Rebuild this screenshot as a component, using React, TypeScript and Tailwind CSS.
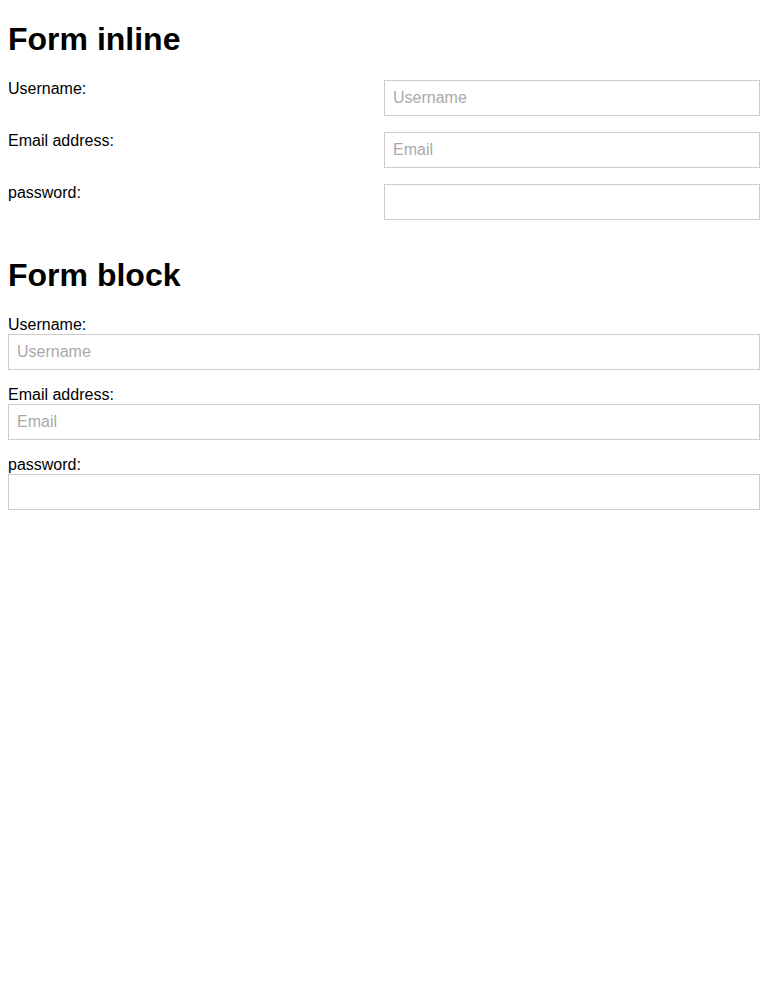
import React from "react";

const font = { fontFamily: '"Liberation Sans", Arial, sans-serif' };

function Input({ placeholder, type = "text" }: { placeholder?: string; type?: string }) {
  return (
    <input
      type={type}
      placeholder={placeholder}
      className="block w-full h-[36px] border border-[#cccccc] bg-white px-[8px] pt-[1px] text-[16px] text-black placeholder:text-[#a9a9a9] outline-none"
      style={font}
    />
  );
}

export default function App() {
  const rows = [
    { label: "Username:", placeholder: "Username", type: "text" },
    { label: "Email address:", placeholder: "Email", type: "email" },
    { label: "password:", placeholder: "", type: "password" },
  ];
  return (
    <div className="px-[8px] bg-white min-h-[1002px] text-black" style={font}>
      <h1 className="text-[32px] leading-[37px] font-bold mt-[21.44px] mb-[21.44px]">Form inline</h1>
      <form className="flex flex-col gap-[16px]">
        {rows.map((r) => (
          <div key={r.label} className="grid grid-cols-2">
            <label className="text-[16px] leading-[18px]">{r.label}</label>
            <Input placeholder={r.placeholder} type={r.type} />
          </div>
        ))}
      </form>
      <h1 className="text-[32px] leading-[37px] font-bold mt-[37.44px] mb-[21.44px]">Form block</h1>
      <form className="flex flex-col gap-[16px]">
        {rows.map((r) => (
          <div key={r.label} className="flex flex-col">
            <label className="text-[16px] leading-[18px]">{r.label}</label>
            <Input placeholder={r.placeholder} type={r.type} />
          </div>
        ))}
      </form>
    </div>
  );
}
